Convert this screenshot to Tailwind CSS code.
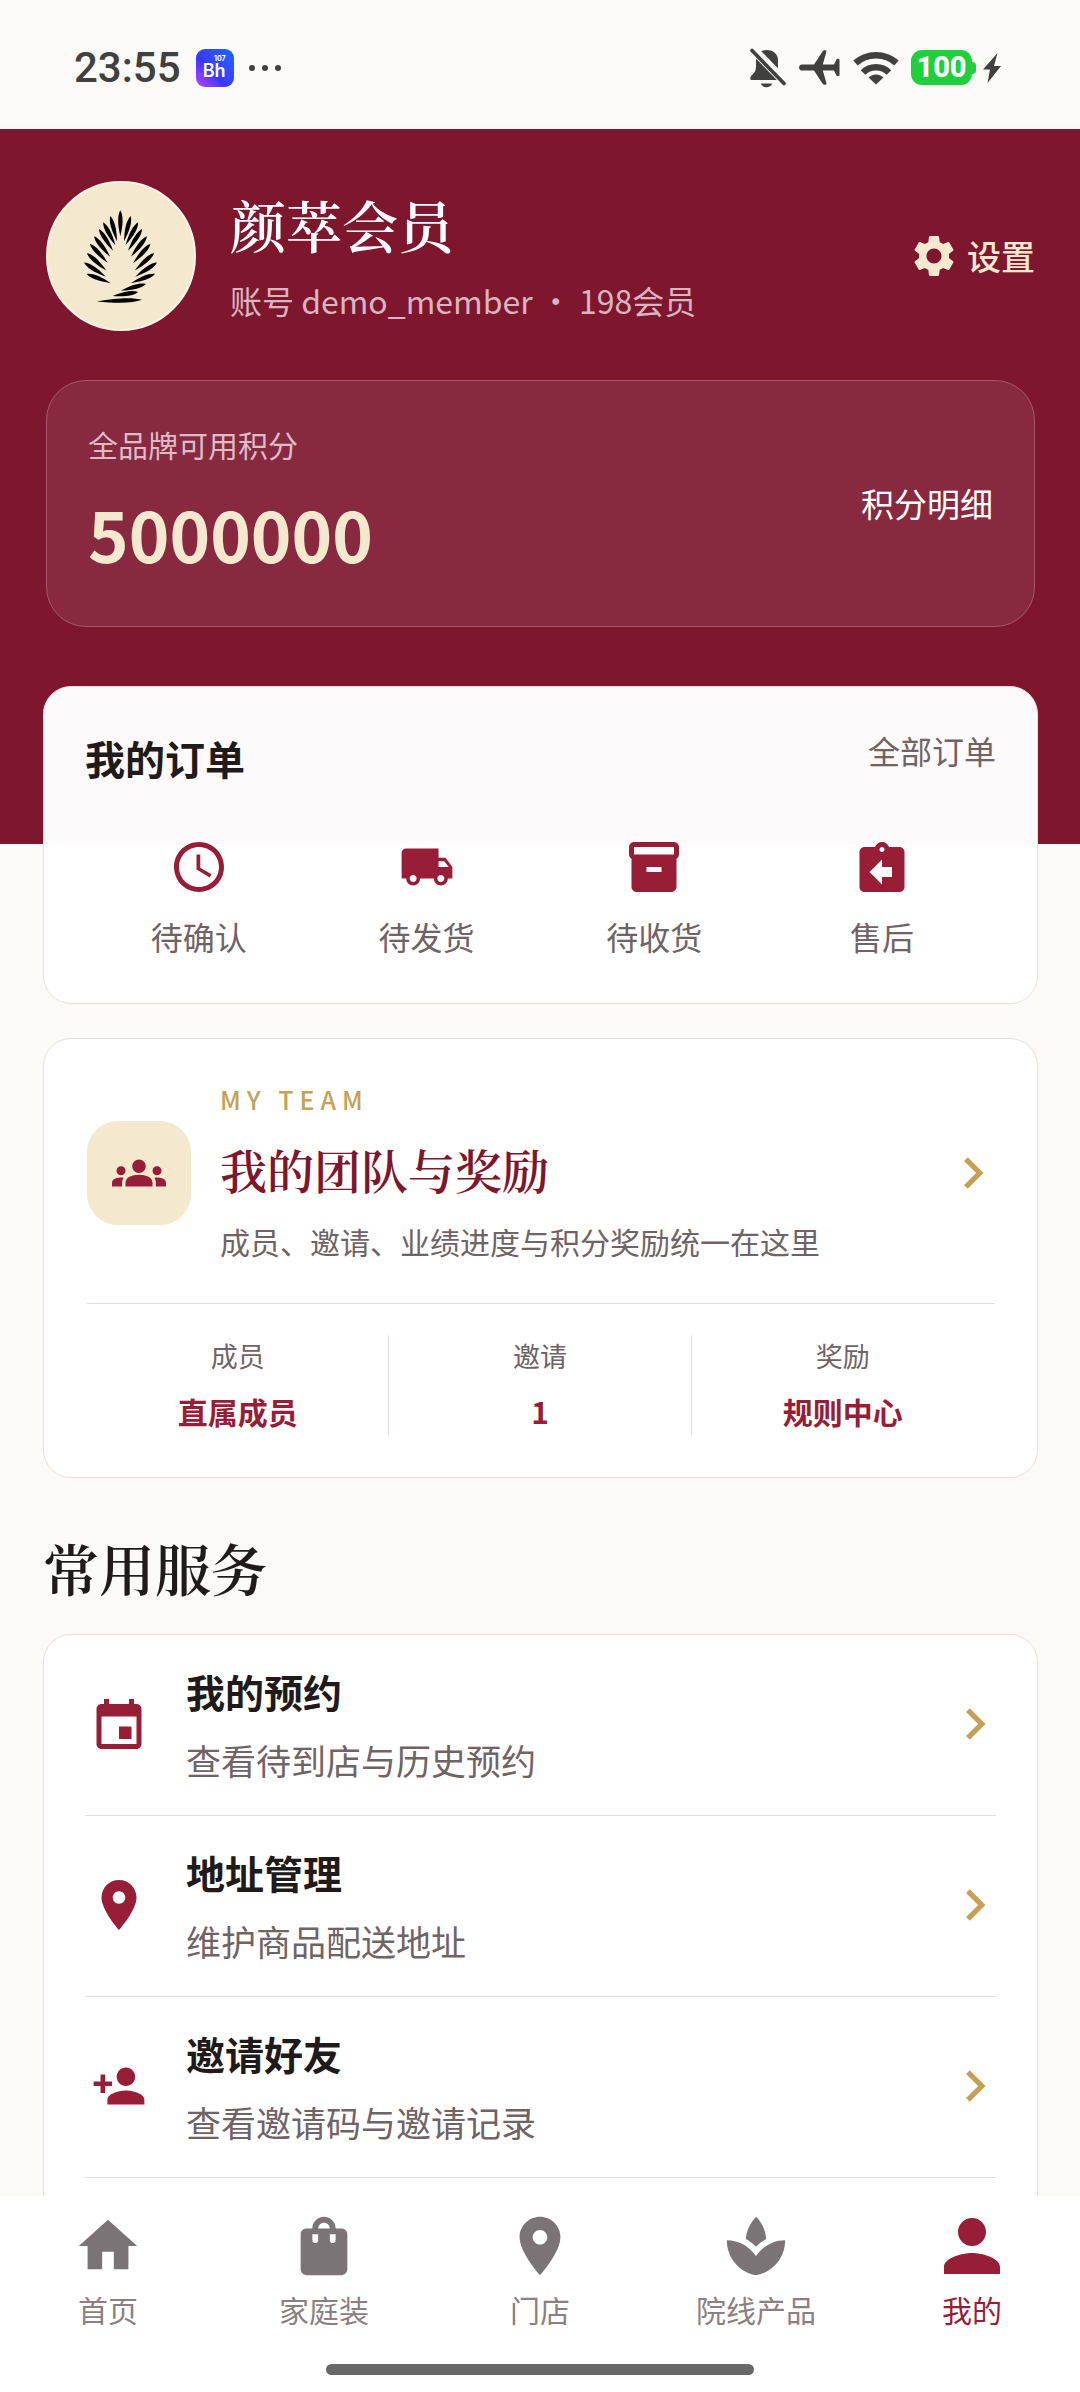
<!DOCTYPE html>
<html lang="zh-CN">
  <head>
    <meta charset="UTF-8" />
    <meta name="viewport" content="width=device-width, initial-scale=1.0" />
    <script src="https://cdn.jsdelivr.net/npm/@tailwindcss/browser@4"></script>
    <title>我的</title>
  </head>
  <body
    class="flex h-screen flex-col overflow-hidden bg-[#fbfaf6] font-['Noto_Sans_CJK_SC',sans-serif] text-[#211a1b]"
  >
    <!-- Status bar -->
    <div
      class="flex h-[129px] shrink-0 items-center justify-between pt-[6px] pr-[79px] pl-[74px] text-[#40403e]"
    >
      <div class="flex items-center">
        <span class="font-[Roboto,sans-serif] text-[42px] leading-[50px] font-medium">23:55</span>
        <span
          class="ml-[15px] flex size-[38px] flex-col items-end justify-center rounded-[9px] bg-linear-to-tr from-[#c035ff] via-[#3a35ff] via-40% to-[#1668ff] pr-[8px] font-[Inter,sans-serif] text-white"
        >
          <span class="text-[7px] leading-[7px] font-bold">107</span>
          <span class="text-[18px] leading-[18px] font-semibold">Bh</span>
        </span>
        <span class="ml-[15px] flex gap-[7px]">
          <i class="size-[6px] rounded-full bg-[#40403e]"></i>
          <i class="size-[6px] rounded-full bg-[#40403e]"></i>
          <i class="size-[6px] rounded-full bg-[#40403e]"></i>
        </span>
      </div>
      <div class="flex items-center">
        <svg class="h-[40px] w-[36px]" viewBox="0 0 36 40" fill="currentColor">
          <path d="M17 2c6 0 11 4 11 10v8c0 3 5 8 6 10v2H1c-1-1-1-2 0-4 3-3 5-5 5-9v-7C6 6 11 2 17 2zM11 35.500h11c-1 5-10 5-11 0z" />
          <path d="M-2 -4 38 37" stroke="#fbfaf6" stroke-width="9" />
          <path d="M2 2.500 34 35.500" stroke="currentColor" stroke-width="3.600" stroke-linecap="round" />
        </svg>
        <svg class="ml-[13px] h-[35px] w-[41px]" viewBox="0 0 41 35" fill="currentColor">
          <path d="M3 14.500h12L23.500 1.500C24.500 0 27.500-.5 27.500 1.500L23.800 14.500H35l2.500-5C38 8.500 40.500 8.500 40.500 10v15c0 1.500-2.500 1.500-3 .5l-2.500-5H23.800l3.700 13c0 2-3 1.500-4 0L15 20.500H3c-4 0-4-6 0-6z" />
        </svg>
        <svg class="ml-[13px] h-[34px] w-[46px]" viewBox="0 0 46 34" fill="none" stroke="currentColor">
          <path d="M2.500 12C14 1.500 32 1.500 43.500 12" stroke-width="6.500" />
          <path d="M10 21.500C17 14.500 29 14.500 36 21.500" stroke-width="6.500" />
          <path d="M15.500 26.500C20 22.500 26 22.500 30.500 26.500L23 33.500z" fill="currentColor" stroke="none" />
        </svg>
        <span class="ml-[12px] flex items-center">
          <span
            class="flex h-[35px] w-[61px] items-center justify-center rounded-[11px] bg-[#1fcf3b] font-[Roboto,sans-serif] text-[29px] leading-[35px] font-extrabold text-white"
            >100</span
          >
          <i class="h-[12px] w-[4px] rounded-r-[4px] bg-[#1fcf3b]"></i>
        </span>
        <svg class="ml-[7px] h-[30px] w-[18px]" viewBox="0 0 18 30" fill="currentColor">
          <path d="M14.500 0 0 16.500h7L4.500 30 18 13h-7z" />
        </svg>
      </div>
    </div>

    <main class="min-h-0 flex-1 overflow-hidden">
      <!-- Profile header -->
      <header class="bg-[#7e172e] pt-[52px] pr-[45px] pb-[217px] pl-[46px]">
        <div class="flex items-center">
          <svg
            class="size-[150px] shrink-0 rounded-full border-2 border-[#f9f3e6] bg-[#f4e8cf]"
            viewBox="-42 63 450 450"
          >
            <defs>
              <path id="leaf" d="M0 0C16-9 42-9 80 0C42 9 16 9 0 0Z" />
            </defs>
            <use href="#leaf" transform="translate(181 147) rotate(90)" />
            <use href="#leaf" transform="translate(150 165) rotate(75)" />
            <use href="#leaf" transform="translate(128 184) rotate(62)" />
            <use href="#leaf" transform="translate(115 205) rotate(57)" />
            <use href="#leaf" transform="translate(100 227) rotate(52)" />
            <use href="#leaf" transform="translate(87 250) rotate(47)" />
            <use href="#leaf" transform="translate(78 279) rotate(42)" />
            <use href="#leaf" transform="translate(69 308) rotate(33)" />
            <use href="#leaf" transform="translate(77 343) rotate(21)" />
            <use href="#leaf" transform="translate(213 165) rotate(105)" />
            <use href="#leaf" transform="translate(236 184) rotate(119)" />
            <use href="#leaf" transform="translate(248 205) rotate(123)" />
            <use href="#leaf" transform="translate(263 227) rotate(128)" />
            <use href="#leaf" transform="translate(274 250) rotate(132)" />
            <use href="#leaf" transform="translate(285 279) rotate(138)" />
            <use href="#leaf" transform="translate(294 308) rotate(147)" />
            <use href="#leaf" transform="translate(288 343) rotate(159)" />
            <use href="#leaf" transform="translate(260 374) rotate(165)" />
            <use href="#leaf" transform="translate(236 399) rotate(171)" />
            <use href="#leaf" transform="translate(248 423) rotate(178) scale(1.750 1)" />
          </svg>
          <div class="ml-[34px] flex-1">
            <h1
              class="font-['Noto_Serif_CJK_SC','Noto_Serif_SC','Noto_Sans_CJK_SC',serif] text-[56px] leading-[72px] font-semibold text-white"
            >
              颜萃会员
            </h1>
            <p class="mt-[16px] text-[32px] leading-[48px] text-[#d9b5c0]">
              账号 demo_member ・ 198会员
            </p>
          </div>
          <a href="#" class="flex items-center gap-[8px] text-[34px] leading-[48px] font-medium text-[#f4e8cf]">
            <svg class="size-[50px]" viewBox="0 0 24 24" fill="currentColor">
              <path d="M19.140 12.940c.04-.3.060-.61.060-.94 0-.32-.02-.64-.07-.94l2.030-1.580c.18-.14.230-.41.120-.61l-1.920-3.320c-.12-.22-.37-.29-.59-.22l-2.390.960c-.5-.38-1.030-.7-1.620-.94l-.36-2.540c-.04-.24-.24-.41-.48-.41h-3.840c-.24 0-.43.170-.47.410l-.36 2.540c-.59.240-1.130.570-1.620.940l-2.390-.96c-.22-.08-.47 0-.59.220L2.740 8.870c-.12.210-.08.470.120.610l2.030 1.580c-.05.300-.09.630-.09.940s.02.640.070.940l-2.030 1.580c-.18.140-.23.410-.12.610l1.920 3.320c.12.220.37.290.59.220l2.390-.96c.5.380 1.030.700 1.620.940l.36 2.540c.05.240.24.410.48.410h3.840c.24 0 .44-.17.470-.41l.36-2.540c.59-.24 1.130-.56 1.620-.94l2.390.960c.22.080.47 0 .59-.22l1.920-3.320c.12-.22.070-.47-.12-.61l-2.010-1.580zM12 15.600c-1.980 0-3.600-1.620-3.600-3.600s1.620-3.600 3.600-3.600 3.600 1.620 3.600 3.600-1.620 3.600-3.600 3.600z" />
            </svg>
            设置
          </a>
        </div>

        <section
          class="mt-[49px] flex items-center justify-between rounded-[40px] border border-[#a4586b] bg-[#882940] px-[41px] pt-[41px] pb-[42px]"
        >
          <div>
            <p class="text-[30px] leading-[44px] text-[#dcbcc6]">全品牌可用积分</p>
            <p class="mt-[16px] text-[69px] leading-[102px] font-bold text-[#f4e8cf]">5000000</p>
          </div>
          <a href="#" class="text-[33px] leading-[48px] text-white">积分明细</a>
        </section>
      </header>

      <!-- Orders -->
      <section
        class="relative mr-[42px] -mt-[158px] ml-[43px] rounded-[28px] border border-[#e8dfdc] bg-white/98 px-[41px] pt-[42px] pb-[44px]"
      >
        <div class="flex items-start justify-between">
          <h2 class="text-[40px] leading-[58px] font-semibold">我的订单</h2>
          <a href="#" class="text-[32px] leading-[42px] text-[#6f6365]">全部订单</a>
        </div>
        <nav class="mt-[50px] grid grid-cols-4 text-[32px] leading-[46px] text-[#6f6365]">
          <a href="#" class="flex flex-col items-center gap-[16px]">
            <svg class="size-[60px] text-[#981d37]" viewBox="0 0 24 24" fill="currentColor">
              <path d="M11.990 2C6.470 2 2 6.480 2 12s4.470 10 9.990 10C17.520 22 22 17.520 22 12S17.520 2 11.990 2zM12 20c-4.420 0-8-3.580-8-8s3.580-8 8-8 8 3.580 8 8-3.580 8-8 8zm.5-13H11v6l5.250 3.150.75-1.230-4.500-2.670z" />
            </svg>
            待确认
          </a>
          <a href="#" class="flex flex-col items-center gap-[16px]">
            <svg class="size-[60px] text-[#981d37]" viewBox="-1 -1 26 26" fill="currentColor">
              <path d="M20 8h-3V4H3c-1.100 0-2 .9-2 2v11h2c0 1.660 1.340 3 3 3s3-1.340 3-3h6c0 1.660 1.340 3 3 3s3-1.340 3-3h2v-5l-3-4zM6 18.500c-.83 0-1.500-.67-1.500-1.500s.67-1.500 1.500-1.500 1.500.67 1.500 1.500-.67 1.500-1.500 1.500zm13.500-9l1.960 2.500H17V9.500h2.500zm-1.500 9c-.83 0-1.500-.67-1.500-1.500s.67-1.500 1.500-1.500 1.500.67 1.500 1.500-.67 1.500-1.500 1.500z" />
            </svg>
            待发货
          </a>
          <a href="#" class="flex flex-col items-center gap-[16px]">
            <svg class="size-[60px] text-[#981d37]" viewBox="0 0 24 24" fill="currentColor">
              <path d="M20 2H4c-1 0-2 .9-2 2v3.010c0 .72.430 1.340 1 1.690V20c0 1.100 1.100 2 2 2h14c.9 0 2-.9 2-2V8.700c.57-.35 1-.97 1-1.690V4c0-1.100-1-2-2-2zm-5 12H9v-2h6v2zm5-7H4V4h16v3z" />
            </svg>
            待收货
          </a>
          <a href="#" class="flex flex-col items-center gap-[16px]">
            <svg class="size-[60px] text-[#981d37]" viewBox="0 0 24 24" fill="currentColor">
              <path d="M19 4h-4.180C14.400 2.840 13.300 2 12 2s-2.400.84-2.820 2H5c-1.100 0-2 .9-2 2v14c0 1.100.9 2 2 2h14c1.100 0 2-.9 2-2V6c0-1.100-.9-2-2-2zm-7 0c.55 0 1 .450 1 1s-.45 1-1 1-1-.45-1-1 .45-1 1-1zm4 12h-4v3l-5-5 5-5v3h4v4z" />
            </svg>
            售后
          </a>
        </nav>
      </section>

      <!-- Team -->
      <section
        class="mt-[34px] mr-[42px] ml-[43px] rounded-[28px] border border-[#e8dfdc] bg-white px-[43px] py-[42px]"
      >
        <a href="#" class="flex items-center">
          <span class="flex size-[104px] shrink-0 items-center justify-center rounded-[31px] bg-[#f4e8cf]">
            <svg class="size-[54px] text-[#981d37]" viewBox="0 0 24 24" fill="currentColor">
              <path d="M12 12.750c1.630 0 3.070.39 4.240.9 1.080.48 1.760 1.560 1.760 2.730V18H6v-1.610c0-1.180.68-2.260 1.760-2.730 1.170-.52 2.610-.91 4.240-.91zM4 13c1.100 0 2-.9 2-2s-.9-2-2-2-2 .9-2 2 .9 2 2 2zm1.130 1.100C4.760 14.040 4.390 14 4 14c-.99 0-1.930.21-2.780.58C.48 14.900 0 15.620 0 16.430V18h4.500v-1.610c0-.83.23-1.610.63-2.290zM20 13c1.100 0 2-.9 2-2s-.9-2-2-2-2 .9-2 2 .9 2 2 2zm4 3.430c0-.81-.48-1.530-1.220-1.850-.85-.37-1.790-.58-2.780-.58-.39 0-.76.04-1.130.1.400.68.630 1.460.63 2.290V18H24v-1.570zM12 6c1.660 0 3 1.340 3 3s-1.340 3-3 3-3-1.340-3-3 1.340-3 3-3z" />
            </svg>
          </span>
          <span class="ml-[29px] flex flex-1 flex-col">
            <span class="text-[25px] leading-[36px] font-medium tracking-[6px] text-[#c6a056]">MY TEAM</span>
            <span
              class="mt-[19px] font-['Noto_Serif_CJK_SC','Noto_Serif_SC','Noto_Sans_CJK_SC',serif] text-[47px] leading-[66px] font-semibold text-[#7e172e]"
              >我的团队与奖励</span
            >
            <span class="mt-[15px] text-[30px] leading-[48px] text-[#6f6365]"
              >成员、邀请、业绩进度与积分奖励统一在这里</span
            >
          </span>
          <svg class="size-[42px] text-[#c6a056]" viewBox="4 4 16 16" fill="currentColor">
            <path d="M10 6 8.590 7.410 13.170 12l-4.580 4.590L10 18l6-6z" />
          </svg>
        </a>
        <dl class="mt-[38px] grid grid-cols-3 divide-x divide-[#e8dfdc] border-t border-[#e8dfdc] pt-[31px] text-center">
          <div>
            <dt class="text-[27px] leading-[42px] text-[#6f6365]">成员</dt>
            <dd class="mt-[10px] text-[30px] leading-[48px] font-bold text-[#981d37]">直属成员</dd>
          </div>
          <div>
            <dt class="text-[27px] leading-[42px] text-[#6f6365]">邀请</dt>
            <dd class="mt-[10px] text-[30px] leading-[48px] font-bold text-[#981d37]">1</dd>
          </div>
          <div>
            <dt class="text-[27px] leading-[42px] text-[#6f6365]">奖励</dt>
            <dd class="mt-[10px] text-[30px] leading-[48px] font-bold text-[#981d37]">规则中心</dd>
          </div>
        </dl>
      </section>

      <!-- Services -->
      <h2
        class="mt-[49px] mr-[42px] ml-[43px] font-['Noto_Serif_CJK_SC','Noto_Serif_SC','Noto_Sans_CJK_SC',serif] text-[56px] leading-[80px] font-semibold"
      >
        常用服务
      </h2>
      <ul
        class="mt-[27px] mr-[42px] ml-[43px] rounded-[28px] border border-[#e8dfdc] bg-white px-[41px] pb-[200px]"
      >
        <li class="border-b border-[#e8dfdc]">
          <a href="#" class="flex items-center pt-[28px] pb-[30px]">
            <span class="flex w-[68px] justify-center text-[#981d37]">
              <svg class="size-[60px]" viewBox="0 0 24 24" fill="currentColor">
                <path d="M17 13h-5v5h5v-5zM16 2v2H8V2H6v2H5c-1.110 0-1.990.9-1.990 2L3 20c0 1.100.89 2 2 2h14c1.100 0 2-.9 2-2V6c0-1.100-.9-2-2-2h-1V2h-2zm3 18H5V9h14v11z" />
              </svg>
            </span>
            <span class="ml-[33px] flex flex-1 flex-col gap-[16px]">
              <span class="text-[39px] leading-[56px] font-semibold">我的预约</span>
              <span class="text-[35px] leading-[50px] text-[#6f6365]">查看待到店与历史预约</span>
            </span>
            <svg class="size-[42px] text-[#c6a056]" viewBox="4 4 16 16" fill="currentColor">
              <path d="M10 6 8.590 7.410 13.170 12l-4.580 4.590L10 18l6-6z" />
            </svg>
          </a>
        </li>
        <li class="border-b border-[#e8dfdc]">
          <a href="#" class="flex items-center pt-[28px] pb-[30px]">
            <span class="flex w-[68px] justify-center text-[#981d37]">
              <svg class="size-[60px]" viewBox="0 0 24 24" fill="currentColor">
                <path d="M12 2C8.130 2 5 5.130 5 9c0 5.250 7 13 7 13s7-7.750 7-13c0-3.870-3.130-7-7-7zm0 9.500c-1.380 0-2.500-1.120-2.500-2.500s1.120-2.500 2.500-2.500 2.500 1.120 2.500 2.500-1.120 2.500-2.500 2.500z" />
              </svg>
            </span>
            <span class="ml-[33px] flex flex-1 flex-col gap-[16px]">
              <span class="text-[39px] leading-[56px] font-semibold">地址管理</span>
              <span class="text-[35px] leading-[50px] text-[#6f6365]">维护商品配送地址</span>
            </span>
            <svg class="size-[42px] text-[#c6a056]" viewBox="4 4 16 16" fill="currentColor">
              <path d="M10 6 8.590 7.410 13.170 12l-4.580 4.590L10 18l6-6z" />
            </svg>
          </a>
        </li>
        <li class="border-b border-[#e8dfdc]">
          <a href="#" class="flex items-center pt-[28px] pb-[30px]">
            <span class="flex w-[68px] justify-center text-[#981d37]">
              <svg class="size-[60px]" viewBox="-1 -1 26 26" fill="currentColor">
                <path d="M15 12c2.210 0 4-1.790 4-4s-1.790-4-4-4-4 1.790-4 4 1.790 4 4 4zm-9-2V7H4v3H1v2h3v3h2v-3h3v-2H6zm9 4c-2.670 0-8 1.340-8 4v2h16v-2c0-2.660-5.330-4-8-4z" />
              </svg>
            </span>
            <span class="ml-[33px] flex flex-1 flex-col gap-[16px]">
              <span class="text-[39px] leading-[56px] font-semibold">邀请好友</span>
              <span class="text-[35px] leading-[50px] text-[#6f6365]">查看邀请码与邀请记录</span>
            </span>
            <svg class="size-[42px] text-[#c6a056]" viewBox="4 4 16 16" fill="currentColor">
              <path d="M10 6 8.590 7.410 13.170 12l-4.580 4.590L10 18l6-6z" />
            </svg>
          </a>
        </li>
      </ul>
    </main>

    <!-- Tab bar -->
    <footer class="shrink-0 bg-white pt-[15px] pb-[17px]">
      <nav class="grid grid-cols-5 text-[30px] leading-[44px] text-[#8b7f81]">
        <a href="#" class="flex flex-col items-center gap-[6px]">
          <svg class="size-[70px] text-[#7b7476]" viewBox="0 0 24 24" fill="currentColor">
            <path d="M10 20v-6h4v6h5v-8h3L12 3 2 12h3v8z" />
          </svg>
          首页
        </a>
        <a href="#" class="flex flex-col items-center gap-[6px]">
          <svg class="size-[70px] text-[#7b7476]" viewBox="0 0 24 24" fill="currentColor">
            <path d="M18 6h-2c0-2.210-1.790-4-4-4S8 3.790 8 6H6c-1.100 0-2 .9-2 2v12c0 1.100.9 2 2 2h12c1.100 0 2-.9 2-2V8c0-1.100-.9-2-2-2zm-8 4c0 .55-.45 1-1 1s-1-.45-1-1V8h2v2zm2-6c1.100 0 2 .9 2 2h-4c0-1.100.9-2 2-2zm4 6c0 .55-.45 1-1 1s-1-.45-1-1V8h2v2z" />
          </svg>
          家庭装
        </a>
        <a href="#" class="flex flex-col items-center gap-[6px]">
          <svg class="size-[70px] text-[#7b7476]" viewBox="0 0 24 24" fill="currentColor">
            <path d="M12 2C8.130 2 5 5.130 5 9c0 5.250 7 13 7 13s7-7.750 7-13c0-3.870-3.130-7-7-7zm0 9.500c-1.380 0-2.500-1.120-2.500-2.500s1.120-2.500 2.500-2.500 2.500 1.120 2.500 2.500-1.120 2.500-2.500 2.500z" />
          </svg>
          门店
        </a>
        <a href="#" class="flex flex-col items-center gap-[6px]">
          <svg class="size-[70px] text-[#7b7476]" viewBox="0 0 24 24" fill="currentColor">
            <path d="M15.490 9.630c-.18-2.790-1.310-5.510-3.430-7.630-2.140 2.140-3.320 4.860-3.550 7.630 1.280.68 2.460 1.560 3.490 2.630 1.030-1.060 2.210-1.940 3.490-2.630zM12 15.450C9.850 12.170 6.180 10 2 10c0 5.320 3.360 9.820 8.030 11.490.63.23 1.290.4 1.970.51.68-.12 1.330-.29 1.970-.51C18.640 19.820 22 15.320 22 10c-4.180 0-7.850 2.170-10 5.450z" />
          </svg>
          院线产品
        </a>
        <a href="#" class="flex flex-col items-center gap-[6px] text-[#981d37]" aria-current="page">
          <svg class="size-[70px]" viewBox="2 2 20 20" fill="currentColor">
            <path d="M12 12c2.210 0 4-1.790 4-4s-1.790-4-4-4-4 1.790-4 4 1.790 4 4 4zm0 2c-2.670 0-8 1.340-8 4v2h16v-2c0-2.660-5.330-4-8-4z" />
          </svg>
          我的
        </a>
      </nav>
      <div class="mx-auto mt-[33px] h-[11px] w-[428px] rounded-full bg-[#686868]"></div>
    </footer>
  </body>
</html>
